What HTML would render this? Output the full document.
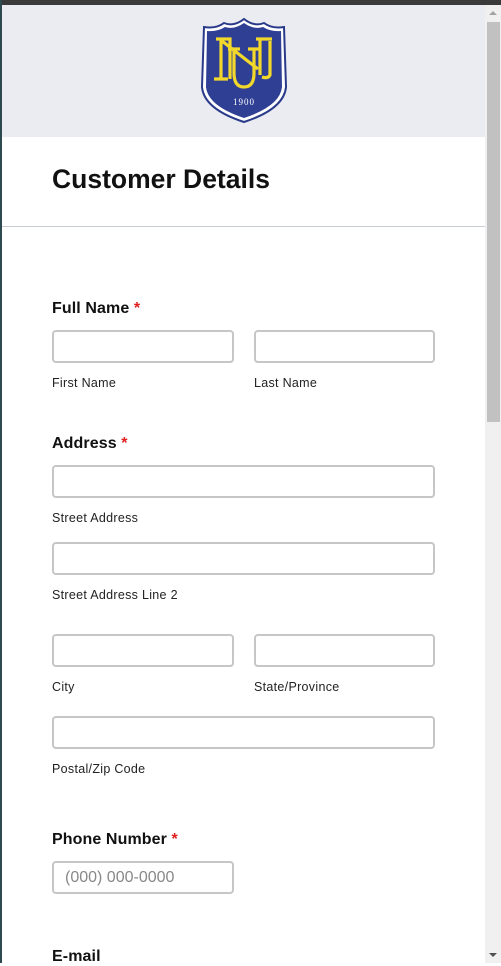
<!DOCTYPE html>
<html><head><style>
*{margin:0;padding:0;box-sizing:border-box}
body{width:501px;height:963px;overflow:hidden;background:#fff;font-family:"Liberation Sans",sans-serif;position:relative}
.a{position:absolute}
.lbl{position:absolute;left:52px;font-size:16px;font-weight:bold;color:#111;letter-spacing:0.1px}
.lbl span{color:#e02020}
.in{position:absolute;height:33px;border:2px solid #c6c6c6;border-radius:4px;background:#fff}
.sub{position:absolute;font-size:12.5px;color:#222;letter-spacing:0.3px}
</style></head><body>
<div class="a" style="left:0;top:0;width:501px;height:5px;background:#3a3a3a"></div>
<div class="a" style="left:0;top:0;width:2px;height:963px;background:#2d4a50"></div>
<div class="a" style="left:2px;top:5px;width:483px;height:132px;background:#ebecf1"></div>
<svg class="a" style="left:200px;top:17px" width="88" height="107" viewBox="0 0 88 107">
<path d="M44 2 Q54 10 64 6 Q72 12 84 10 L86 70 Q84 92 44 105 Q4 92 2 70 L4 10 Q16 12 24 6 Q34 10 44 2Z" fill="#fff" stroke="#2a3a8a" stroke-width="2"/>
<path d="M44 6 Q54 13 63 10 Q71 15 81 14 L82 70 Q80 89 44 101 Q8 89 6 70 L7 14 Q17 15 25 10 Q34 13 44 6Z" fill="#2f3f94"/>
<g fill="none" stroke="#f2d82a" stroke-width="3.2">
<path d="M16 22 H30 V62 M21 22 V62 M14 62 H28"/>
<path d="M22 24 L58 52"/>
<path d="M34 32 V56 Q34 70 44 70 Q54 70 54 56 V32 M28 32 H40 M48 32 H60"/>
<path d="M60 22 V58 M56 22 H72 M62 60 Q68 62 70 58 V24"/>
</g>
<text x="44" y="88" text-anchor="middle" font-size="9" fill="#fff" font-family="Liberation Serif,serif" letter-spacing="1">1900</text>
</svg>
<div class="a" style="left:52px;top:164px;font-size:26.5px;font-weight:bold;color:#111">Customer Details</div>
<div class="a" style="left:2px;top:226px;width:483px;height:1px;background:#c8ccd4"></div>

<div class="lbl" style="top:300px">Full Name <span>*</span></div>
<div class="in" style="left:52px;top:330px;width:182px"></div>
<div class="in" style="left:254px;top:330px;width:181px"></div>
<div class="sub" style="left:52px;top:376px">First Name</div>
<div class="sub" style="left:254px;top:376px">Last Name</div>

<div class="lbl" style="top:435px">Address <span>*</span></div>
<div class="in" style="left:52px;top:465px;width:383px"></div>
<div class="sub" style="left:52px;top:511px">Street Address</div>
<div class="in" style="left:52px;top:542px;width:383px"></div>
<div class="sub" style="left:52px;top:588px">Street Address Line 2</div>
<div class="in" style="left:52px;top:634px;width:182px"></div>
<div class="in" style="left:254px;top:634px;width:181px"></div>
<div class="sub" style="left:52px;top:680px">City</div>
<div class="sub" style="left:254px;top:680px">State/Province</div>
<div class="in" style="left:52px;top:716px;width:383px"></div>
<div class="sub" style="left:52px;top:762px">Postal/Zip Code</div>

<div class="lbl" style="top:831px">Phone Number <span>*</span></div>
<div class="in" style="left:52px;top:861px;width:182px;font-size:16px;color:#888;padding:6px 0 0 11px">(000) 000-0000</div>
<div class="lbl" style="top:948px">E-mail</div>

<div class="a" style="left:485px;top:5px;width:16px;height:958px;background:#f0f0f0"></div>
<div class="a" style="left:487px;top:22px;width:13px;height:400px;background:#c1c1c1"></div>
<div class="a" style="left:489px;top:11px;width:0;height:0;border-left:4px solid transparent;border-right:4px solid transparent;border-bottom:4px solid #a3a3a3"></div>
<div class="a" style="left:489px;top:953px;width:0;height:0;border-left:4px solid transparent;border-right:4px solid transparent;border-top:4px solid #505050"></div>
</body></html>
